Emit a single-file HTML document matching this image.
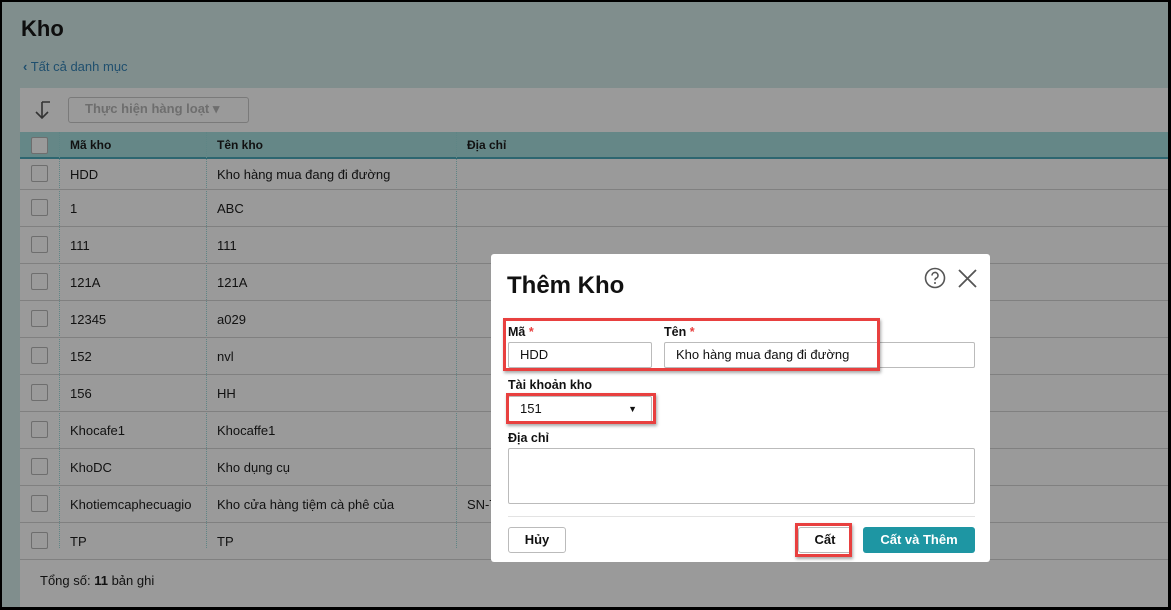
<!DOCTYPE html>
<html><head><meta charset="utf-8"><style>
*{box-sizing:border-box;margin:0;padding:0}
body{width:1171px;height:610px;background:#000;font-family:"Liberation Sans","Noto Sans CJK SC",sans-serif;position:relative;overflow:hidden;font-size:13px;color:#111}
.pg{position:absolute;left:2px;top:2px;width:1166px;height:605px;background:#808e8d}
.abs{position:absolute}
.tbl{position:absolute;left:20px;top:88px;width:1148px;height:519px;background:#9a9a9a}
.hdr{position:absolute;left:0;top:44px;width:100%;height:27px;background:#658787;border-bottom:2px solid #2d6670}
.row{position:absolute;left:0;width:100%;border-bottom:1px solid #808080}
.cb{position:absolute;left:11px;width:17px;height:17px;border:1px solid #6e6e6e;border-radius:2px;background:#9a9a9a}
.vl{position:absolute;top:44px;height:416px;border-left:1px dotted #5e8585}
.t{position:absolute;white-space:nowrap}
.dlg{position:absolute;left:491px;top:254px;width:499px;height:308px;background:#fff;border-radius:3px}
.inp{position:absolute;border:1px solid #bbb;border-radius:2px;background:#fff;font-size:13px;padding-left:11px}
.red{position:absolute;border:3px solid #e8403f;box-shadow:1px 2px 3px rgba(0,0,0,.35)}
.lbl{position:absolute;font-weight:bold;font-size:12.5px}
</style></head><body>
<div class="pg"></div>
<div class="t" style="left:21px;top:16px;font-size:22px;font-weight:bold;color:#0e0e0e">Kho</div>
<div class="t" style="left:23px;top:59px;font-size:13px;color:#1f4f6e"><span style="font-weight:bold">‹</span> Tất cả danh mục</div>
<div class="tbl">
 <svg class="abs" style="left:14px;top:12px" width="20" height="22" viewBox="0 0 20 22"><path d="M8 2v16M2 12l6 6 6-6M8 2h8" stroke="#333" stroke-width="1.6" fill="none"/></svg>
 <div class="abs" style="left:48px;top:9px;width:181px;height:26px;border:1px solid #7a7a7a;border-radius:3px"></div>
 <div class="t" style="left:65px;top:13px;color:#6e6e6e;font-weight:bold;font-size:13px">Thực hiện hàng loạt ▾</div>
 <div class="hdr"></div>
 <div class="cb" style="top:49px"></div>
 <div class="t" style="left:50px;top:50px;font-weight:bold;font-size:12px">Mã kho</div>
 <div class="t" style="left:197px;top:50px;font-weight:bold;font-size:12px">Tên kho</div>
 <div class="t" style="left:447px;top:50px;font-weight:bold;font-size:12px">Địa chỉ</div>
 <div class="vl" style="left:39px"></div><div class="vl" style="left:186px"></div><div class="vl" style="left:436px"></div>
 <div class="row" style="top:71px;height:31px"><div class="cb" style="top:6px"></div><div class="t" style="left:50px;top:8px">HDD</div><div class="t" style="left:197px;top:8px">Kho hàng mua đang đi đường</div></div>
 <div class="row" style="top:102px;height:37px"><div class="cb" style="top:9px"></div><div class="t" style="left:50px;top:11px">1</div><div class="t" style="left:197px;top:11px">ABC</div></div>
 <div class="row" style="top:139px;height:37px"><div class="cb" style="top:9px"></div><div class="t" style="left:50px;top:11px">111</div><div class="t" style="left:197px;top:11px">111</div></div>
 <div class="row" style="top:176px;height:37px"><div class="cb" style="top:9px"></div><div class="t" style="left:50px;top:11px">121A</div><div class="t" style="left:197px;top:11px">121A</div></div>
 <div class="row" style="top:213px;height:37px"><div class="cb" style="top:9px"></div><div class="t" style="left:50px;top:11px">12345</div><div class="t" style="left:197px;top:11px">a029</div></div>
 <div class="row" style="top:250px;height:37px"><div class="cb" style="top:9px"></div><div class="t" style="left:50px;top:11px">152</div><div class="t" style="left:197px;top:11px">nvl</div></div>
 <div class="row" style="top:287px;height:37px"><div class="cb" style="top:9px"></div><div class="t" style="left:50px;top:11px">156</div><div class="t" style="left:197px;top:11px">HH</div></div>
 <div class="row" style="top:324px;height:37px"><div class="cb" style="top:9px"></div><div class="t" style="left:50px;top:11px">Khocafe1</div><div class="t" style="left:197px;top:11px">Khocaffe1</div></div>
 <div class="row" style="top:361px;height:37px"><div class="cb" style="top:9px"></div><div class="t" style="left:50px;top:11px">KhoDC</div><div class="t" style="left:197px;top:11px">Kho dụng cụ</div></div>
 <div class="row" style="top:398px;height:37px"><div class="cb" style="top:9px"></div><div class="t" style="left:50px;top:11px">Khotiemcaphecuagio</div><div class="t" style="left:197px;top:11px">Kho cửa hàng tiệm cà phê của</div><div class="t" style="left:447px;top:11px">SN-T</div></div>
 <div class="row" style="top:435px;height:37px"><div class="cb" style="top:9px"></div><div class="t" style="left:50px;top:11px">TP</div><div class="t" style="left:197px;top:11px">TP</div></div>
 <div class="t" style="left:20px;top:485px">Tổng số: <b>11</b> bản ghi</div>
</div>
<div class="dlg">
 <div class="t" style="left:16px;top:18px;font-size:24px;font-weight:bold">Thêm Kho</div>
 <svg class="abs" style="left:433px;top:13px" width="22" height="22" viewBox="0 0 22 22"><circle cx="11" cy="11" r="9.5" stroke="#555" stroke-width="1.6" fill="none"/><path d="M8 8.5a3 3 0 1 1 4 2.8c-.8.4-1 1-1 2" stroke="#555" stroke-width="1.6" fill="none"/><circle cx="11" cy="16" r="1" fill="#555"/></svg>
 <svg class="abs" style="left:467px;top:15px" width="19" height="19" viewBox="0 0 19 19"><path d="M1 1l17 17M18 1L1 18" stroke="#555" stroke-width="1.8"/></svg>
 <div class="lbl" style="left:17px;top:71px">Mã <span style="color:#e8403f">*</span></div>
 <div class="lbl" style="left:173px;top:71px">Tên <span style="color:#e8403f">*</span></div>
 <div class="inp" style="left:17px;top:88px;width:144px;height:26px;line-height:24px">HDD</div>
 <div class="inp" style="left:173px;top:88px;width:311px;height:26px;line-height:24px">Kho hàng mua đang đi đường</div>
 <div class="lbl" style="left:17px;top:124px">Tài khoản kho</div>
 <div class="inp" style="left:17px;top:142px;width:144px;height:26px;line-height:24px">151<span style="position:absolute;right:14px;top:0;font-size:9px">▼</span></div>
 <div class="lbl" style="left:17px;top:177px">Địa chỉ</div>
 <div class="inp" style="left:17px;top:194px;width:467px;height:56px"></div>
 <div class="abs" style="left:17px;top:262px;width:467px;border-top:1px solid #e3e3e3"></div>
 <div class="abs" style="left:17px;top:273px;width:58px;height:26px;border:1px solid #bbb;border-radius:3px;text-align:center;line-height:24px;font-weight:bold">Hủy</div>
 <div class="abs" style="left:307px;top:273px;width:54px;height:26px;border:1px solid #bbb;border-radius:3px;text-align:center;line-height:24px;font-weight:bold">Cất</div>
 <div class="abs" style="left:372px;top:273px;width:112px;height:26px;background:#1e96a3;border-radius:3px;color:#fff;text-align:center;line-height:26px;font-weight:bold">Cất và Thêm</div>
 <div class="red" style="left:12px;top:64px;width:377px;height:53px"></div>
 <div class="red" style="left:15px;top:139px;width:150px;height:31px"></div>
 <div class="red" style="left:304px;top:269px;width:57px;height:34px"></div>
</div>
</body></html>
